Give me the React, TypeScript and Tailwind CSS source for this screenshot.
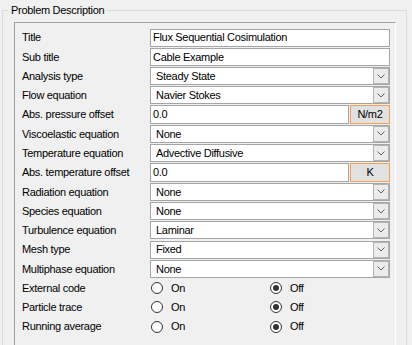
import React from 'react';

type Row =
  | { label: string; kind: 'text'; value: string }
  | { label: string; kind: 'select'; value: string }
  | { label: string; kind: 'unit'; value: string; unit: string }
  | { label: string; kind: 'radio'; on: boolean };

const rows: Row[] = [
  { label: 'Title', kind: 'text', value: 'Flux Sequential Cosimulation' },
  { label: 'Sub title', kind: 'text', value: 'Cable Example' },
  { label: 'Analysis type', kind: 'select', value: 'Steady State' },
  { label: 'Flow equation', kind: 'select', value: 'Navier Stokes' },
  { label: 'Abs. pressure offset', kind: 'unit', value: '0.0', unit: 'N/m2' },
  { label: 'Viscoelastic equation', kind: 'select', value: 'None' },
  { label: 'Temperature equation', kind: 'select', value: 'Advective Diffusive' },
  { label: 'Abs. temperature offset', kind: 'unit', value: '0.0', unit: 'K' },
  { label: 'Radiation equation', kind: 'select', value: 'None' },
  { label: 'Species equation', kind: 'select', value: 'None' },
  { label: 'Turbulence equation', kind: 'select', value: 'Laminar' },
  { label: 'Mesh type', kind: 'select', value: 'Fixed' },
  { label: 'Multiphase equation', kind: 'select', value: 'None' },
  { label: 'External code', kind: 'radio', on: false },
  { label: 'Particle trace', kind: 'radio', on: false },
  { label: 'Running average', kind: 'radio', on: false },
];

function Chevron() {
  return (
    <svg width="8" height="5" viewBox="0 0 8 5" className="block">
      <path d="M0.5 0.5 L4 4 L7.5 0.5" fill="none" stroke="#606060" strokeWidth="1" />
    </svg>
  );
}

function Radio({ checked, label }: { checked: boolean; label: string }) {
  return (
    <div className="flex items-center gap-[8px]">
      <span className="flex h-[12px] w-[12px] items-center justify-center rounded-full border border-[#333] bg-white">
        {checked && <span className="h-[6px] w-[6px] rounded-full bg-[#333]" />}
      </span>
      <span>{label}</span>
    </div>
  );
}

function Control({ row }: { row: Row }) {
  if (row.kind === 'text') {
    return (
      <div className="flex h-[18px] flex-1 items-center border border-[#a5a5a5] bg-white pl-[2px]">
        {row.value}
      </div>
    );
  }
  if (row.kind === 'select') {
    return (
      <div className="flex h-[18px] flex-1 items-stretch border border-[#a5a5a5] bg-white">
        <div className="flex flex-1 items-center pl-[5px]">{row.value}</div>
        <div className="flex w-[16px] items-center justify-center border border-[#b4b4b4] bg-[#ebebeb]">
          <Chevron />
        </div>
      </div>
    );
  }
  if (row.kind === 'unit') {
    return (
      <div className="flex h-[19px] flex-1 gap-[1px]">
        <div className="flex flex-1 items-center border border-[#a5a5a5] bg-white pl-[2px]">{row.value}</div>
        <div className="flex w-[40px] items-center justify-center border border-[#f5a04c] bg-[#e1e1e1]">
          {row.unit}
        </div>
      </div>
    );
  }
  return (
    <div className="flex flex-1 items-center pl-[1px]">
      <div className="w-[119px]">
        <Radio checked={row.on} label="On" />
      </div>
      <Radio checked={!row.on} label="Off" />
    </div>
  );
}

export default function App() {
  return (
    <div
      className="h-[345px] w-[412px] overflow-hidden bg-[#f0f0f0] pl-[2px] pr-[5px] pt-[3px] text-[11px] tracking-[-0.3px] text-black"
      style={{ fontFamily: '"Liberation Sans", Arial, sans-serif' }}
    >
      <fieldset className="h-[400px] border border-[#dcdcdc]">
        <legend className="ml-[5px] px-[3px] leading-[14px]">Problem Description</legend>
        <div className="ml-[11px] mr-[10px] mt-[5px] h-[400px] border-b border-l border-r border-t border-b-white border-l-[#a0a0a0] border-r-white border-t-[#a0a0a0] pl-[7px] pr-[5px] pt-[5px]">
          {rows.map((row) => (
            <div key={row.label} className="flex h-[19.27px] items-center">
              <div className="w-[128px] shrink-0 whitespace-nowrap">{row.label}</div>
              <Control row={row} />
            </div>
          ))}
        </div>
      </fieldset>
    </div>
  );
}
